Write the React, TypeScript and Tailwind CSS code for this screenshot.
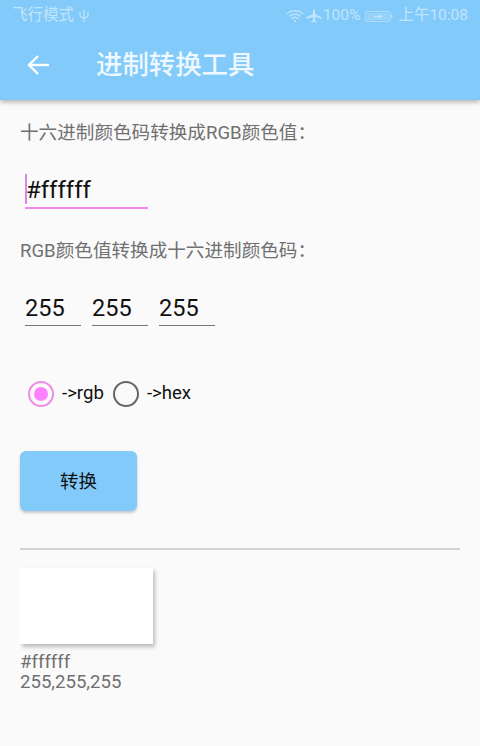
import React from "react";

const font = { fontFamily: '"Roboto","Noto Sans CJK SC",sans-serif' };

function Wifi() {
  return (
    <svg width="18" height="14" viewBox="0 0 18 14" fill="none" stroke="currentColor" strokeWidth="1.2" strokeLinecap="round">
      <path d="M1 4.6C5.6.6 12.4.6 17 4.6" />
      <path d="M3.4 7.2c3.3-2.8 7.9-2.8 11.2 0" />
      <path d="M5.8 9.7c2-1.6 4.4-1.6 6.4 0" />
      <circle cx="9" cy="12" r="1" fill="currentColor" stroke="none" />
    </svg>
  );
}

function Plane() {
  return (
    <svg width="16" height="14" viewBox="0 0 16 14" fill="currentColor">
      <path d="M7.2 0.5C7.2 0 8.8 0 8.8 0.5L9.2 5L15.5 8.2V9.7L9.2 8L8.9 11.2L10.5 12.6V13.5L8 12.8L5.5 13.5V12.6L7.1 11.2L6.8 8L0.5 9.7V8.2L6.8 5Z" />
    </svg>
  );
}

function Battery() {
  return (
    <svg width="28" height="11" viewBox="0 0 28 11" fill="none">
      <rect x="0.5" y="0.5" width="24.5" height="10" rx="1.5" stroke="currentColor" strokeOpacity="0.7" />
      <rect x="2" y="2" width="21.5" height="7" fill="currentColor" fillOpacity="0.35" />
      <rect x="25.8" y="3.5" width="1.7" height="4" fill="currentColor" fillOpacity="0.7" />
      <path d="M9 5h5V3.4L18 5.5 14 7.6V6H9Z" fill="currentColor" />
    </svg>
  );
}

function Usb() {
  return (
    <svg width="10" height="14" viewBox="0 0 10 14" fill="none" stroke="currentColor" strokeWidth="1.2">
      <path d="M5 1V13" />
      <path d="M1 3V6.5C1 8 2.5 8.5 5 9C7.5 8.5 9 8 9 6.5V3" />
    </svg>
  );
}

function Arrow() {
  return (
    <svg width="24" height="24" viewBox="0 0 24 24" fill="none" stroke="currentColor" strokeWidth="2.4">
      <path d="M23 12H3" />
      <path d="M12 3L3 12L12 21" />
    </svg>
  );
}

function Num() {
  return (
    <div className="w-[56px] h-[40px] border-b border-[#757575] text-[23.5px] leading-[34px] text-[#111111] pt-[5px]">255</div>
  );
}

export default function App() {
  return (
    <div style={font} className="w-[480px] h-[746px] bg-[#fafafa] overflow-hidden flex flex-col">
      <header className="h-[100px] shrink-0 bg-[#82cafa] text-white shadow-[0_2px_5px_rgba(0,0,0,0.3)] flex flex-col relative">
        <div className="h-[32px] flex items-center justify-between pl-[12px] pr-[12px] text-[#c3e5fc] text-[15.5px]">
          <div className="flex items-center gap-[5px]">
            <span>飞行模式</span>
            <Usb />
          </div>
          <div className="flex items-center">
            <Wifi />
            <span className="ml-[2px]"><Plane /></span>
            <span className="ml-[1px]">100%</span>
            <span className="ml-[5px]"><Battery /></span>
            <span className="ml-[5px]">上午10:08</span>
          </div>
        </div>
        <div className="flex-1 flex items-center pl-[26px] pb-[2px]">
          <Arrow />
          <span className="ml-[46px] text-[26.4px] font-medium text-[#eef8ff] leading-[32px]">进制转换工具</span>
        </div>
      </header>

      <main className="flex-1 px-[20px] flex flex-col">
        <p className="mt-[21px] text-[18.6px] leading-[24px] text-[#707070] whitespace-nowrap">十六进制颜色码转换成RGB颜色值：</p>
        <div className="mt-[30px] ml-[5px] w-[123px] h-[34px] border-b-2 border-[#f08af0] relative">
          <span className="absolute left-0 top-[-1px] w-[2px] h-[30px] bg-[#d98ae0]"></span>
          <span className="absolute left-[1px] top-[-1px] text-[24px] leading-[32px] text-[#111111]">#ffffff</span>
        </div>
        <p className="mt-[30px] text-[18.6px] leading-[24px] text-[#707070] whitespace-nowrap">RGB颜色值转换成十六进制颜色码：</p>
        <div className="mt-[23px] ml-[5px] flex gap-[11px]">
          <Num />
          <Num />
          <Num />
        </div>
        <div className="mt-[48px] flex items-center ml-[8px] h-[40px] text-[18.6px] text-[#111111]">
          <span className="w-[26px] h-[26px] rounded-full border-[2px] border-[#f08ce8] flex items-center justify-center">
            <span className="w-[14px] h-[14px] rounded-full bg-[#ff80ff]"></span>
          </span>
          <span className="ml-[8px]">-&gt;rgb</span>
          <span className="ml-[9px] w-[26px] h-[26px] rounded-full border-[2px] border-[#666666]"></span>
          <span className="ml-[8px]">-&gt;hex</span>
        </div>
        <button className="mt-[37px] w-[117px] h-[60px] rounded-[6px] bg-[#82cafa] text-[#111111] text-[18.5px] pt-[4px] shadow-[0_2px_3px_rgba(0,0,0,0.2)]">转换</button>
        <div className="mt-[37px] h-[2px] w-[440px] bg-[#d2d2d2]"></div>
        <div className="mt-[18px] w-[133px] h-[76px] bg-white shadow-[2px_3px_4px_rgba(0,0,0,0.25)] [clip-path:inset(-2px_-8px_-8px_0)]"></div>
        <div className="mt-[8px] text-[18.6px] leading-[20px] text-[#707070]">
          <div>#ffffff</div>
          <div>255,255,255</div>
        </div>
      </main>
    </div>
  );
}
